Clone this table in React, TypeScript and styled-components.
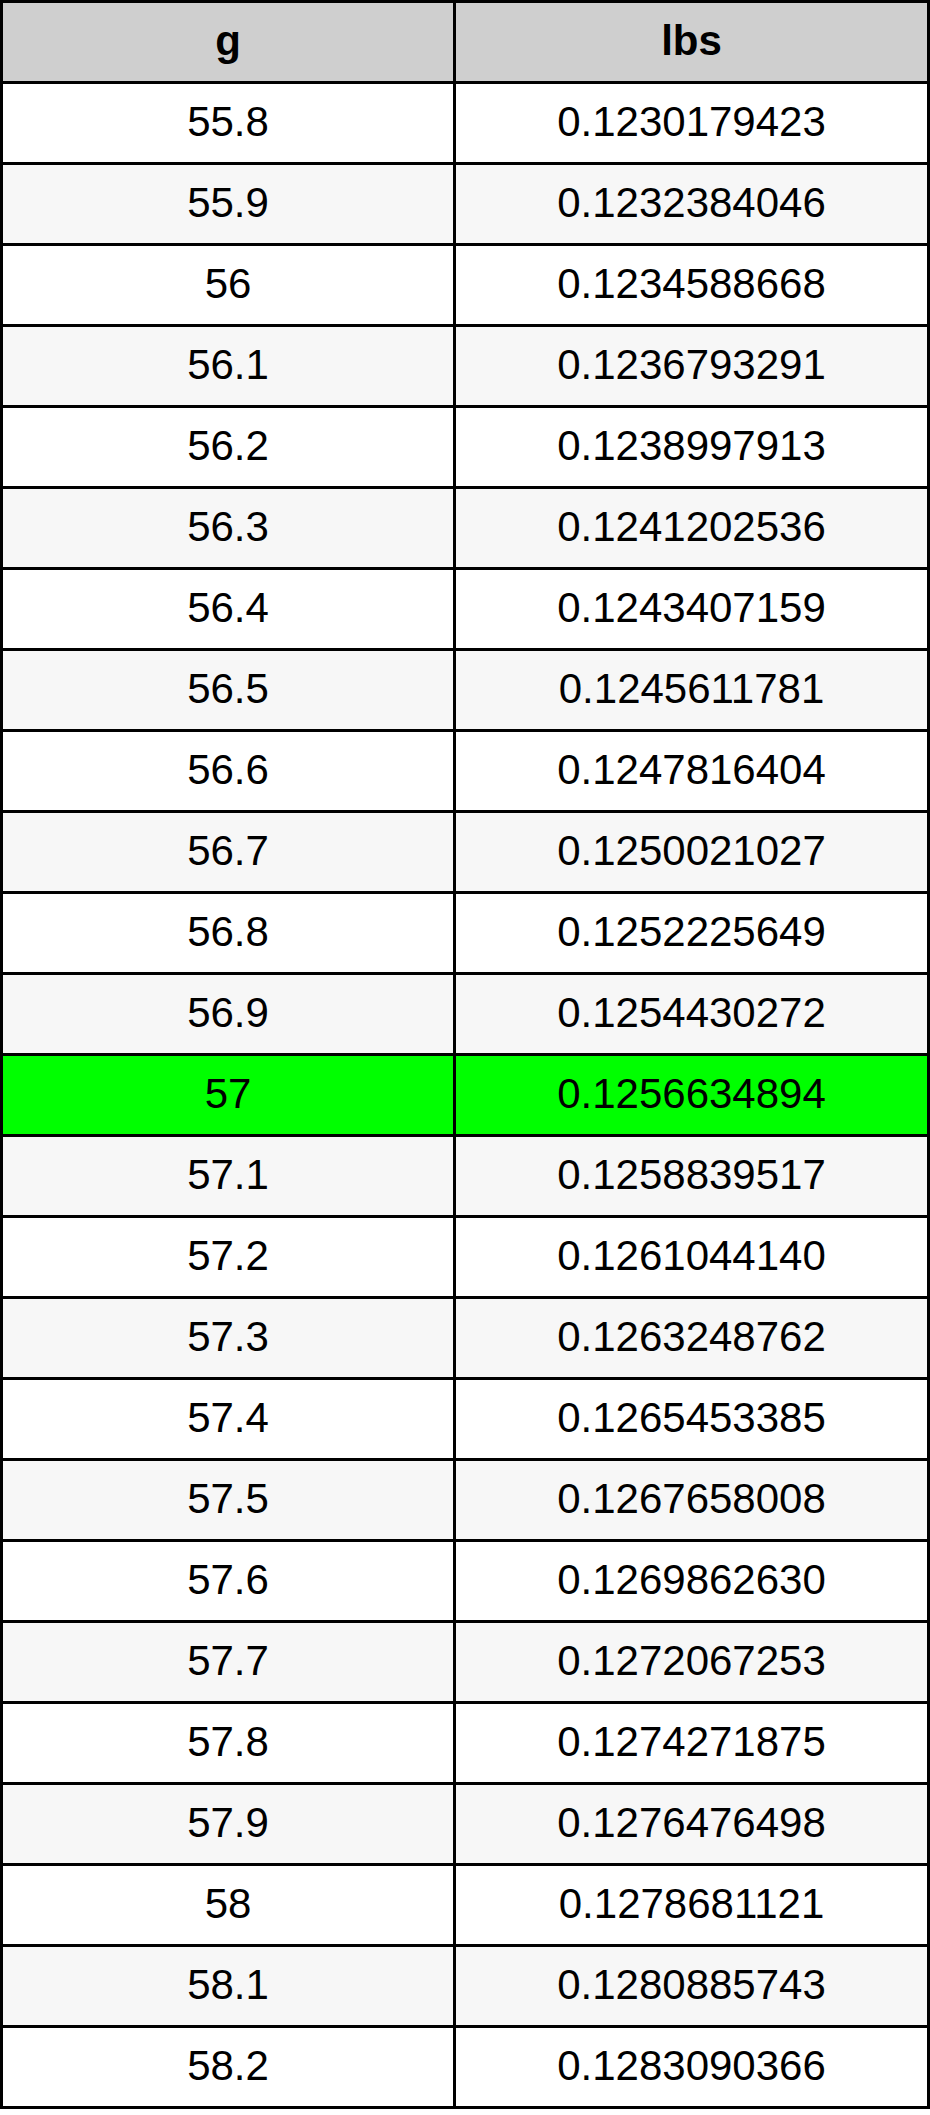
import React from "react";
import styled, { createGlobalStyle } from "styled-components";

const rows: [string, string][] = [
  ["55.8", "0.1230179423"],
  ["55.9", "0.1232384046"],
  ["56", "0.1234588668"],
  ["56.1", "0.1236793291"],
  ["56.2", "0.1238997913"],
  ["56.3", "0.1241202536"],
  ["56.4", "0.1243407159"],
  ["56.5", "0.1245611781"],
  ["56.6", "0.1247816404"],
  ["56.7", "0.1250021027"],
  ["56.8", "0.1252225649"],
  ["56.9", "0.1254430272"],
  ["57", "0.1256634894"],
  ["57.1", "0.1258839517"],
  ["57.2", "0.1261044140"],
  ["57.3", "0.1263248762"],
  ["57.4", "0.1265453385"],
  ["57.5", "0.1267658008"],
  ["57.6", "0.1269862630"],
  ["57.7", "0.1272067253"],
  ["57.8", "0.1274271875"],
  ["57.9", "0.1276476498"],
  ["58", "0.1278681121"],
  ["58.1", "0.1280885743"],
  ["58.2", "0.1283090366"]
];

const highlighted = "57";

const GlobalStyle = createGlobalStyle`
  html, body {
    margin: 0;
    padding: 0;
    background: #ffffff;
  }
`;

const Table = styled.div`
  width: 930px;
  box-sizing: border-box;
  display: grid;
  grid-template-columns: 450px 471px;
  grid-auto-rows: 78px;
  gap: 3px;
  padding: 3px;
  background: #000000;
  font-family: "Liberation Sans", Arial, sans-serif;
  color: #000000;
`;

type Tone = "head" | "plain" | "alt" | "hit";

const tones: Record<Tone, string> = {
  head: "#cfcfcf",
  plain: "#ffffff",
  alt: "#f7f7f7",
  hit: "#00ff00"
};

const Cell = styled.div<{ $tone: Tone }>`
  display: flex;
  align-items: center;
  justify-content: center;
  background: ${({ $tone }) => tones[$tone]};
  font-size: 42px;
  font-weight: ${({ $tone }) => ($tone === "head" ? 700 : 400)};
  padding-bottom: 3px;
  box-sizing: border-box;
`;

const App: React.FC = () => (
  <>
    <GlobalStyle />
    <Table>
      <Cell $tone="head">g</Cell>
      <Cell $tone="head">lbs</Cell>
      {rows.map(([g, lbs], i) => {
        const tone: Tone = g === highlighted ? "hit" : i % 2 ? "alt" : "plain";
        return (
          <React.Fragment key={g}>
            <Cell $tone={tone}>{g}</Cell>
            <Cell $tone={tone}>{lbs}</Cell>
          </React.Fragment>
        );
      })}
    </Table>
  </>
);

export default App;
